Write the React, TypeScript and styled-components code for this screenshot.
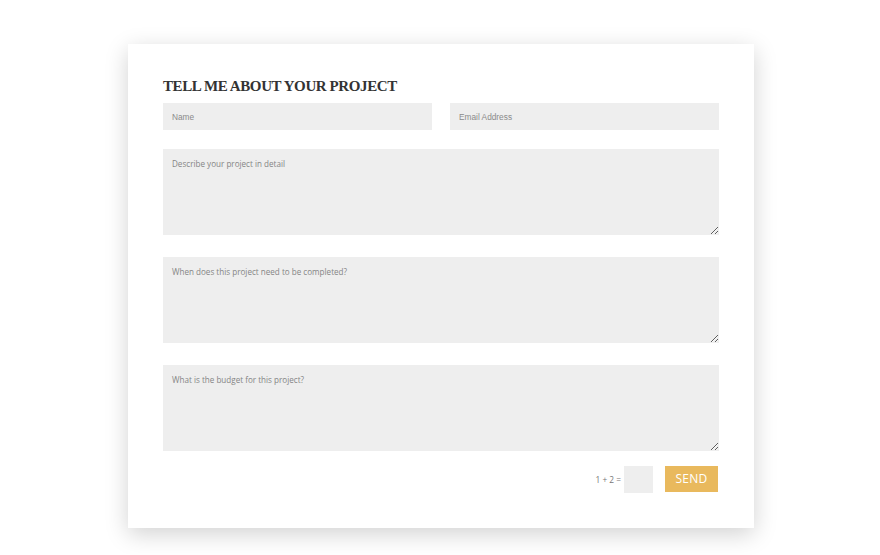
import React from 'react';
import styled, { createGlobalStyle } from 'styled-components';

const GlobalStyle = createGlobalStyle`
  html, body {
    margin: 0;
    padding: 0;
    background: #ffffff;
  }
  body {
    font-family: 'Open Sans', 'Liberation Sans', sans-serif;
  }
`;

const Page = styled.div`
  width: 880px;
  height: 555px;
  padding-top: 44px;
  box-sizing: border-box;
  display: flex;
  justify-content: center;
`;

const Card = styled.form`
  width: 626px;
  height: 484px;
  box-sizing: border-box;
  margin-left: 2px;
  padding: 34px 35px 0 35px;
  background: #ffffff;
  box-shadow: 0 6px 22px rgba(0, 0, 0, 0.18);
  display: flex;
  flex-direction: column;
`;

const Title = styled.h2`
  margin: 0 0 8px 0;
  font-family: 'Liberation Serif', 'DejaVu Serif', serif;
  font-weight: 700;
  font-size: 15px;
  line-height: 17px;
  color: #333333;
  letter-spacing: -0.4px;
`;

const Row = styled.div`
  display: flex;
  gap: 18px;
  margin-bottom: 19px;
`;

const Field = styled.input`
  flex: 1;
  height: 27px;
  border: none;
  outline: none;
  background: #eeeeee;
  padding: 0 9px;
  box-sizing: border-box;
  font-family: 'Liberation Sans', Arial, sans-serif;
  font-size: 8.3px;
  color: #666666;

  &::placeholder {
    color: #8a8a8a;
  }
`;

const Area = styled.textarea`
  display: block;
  width: 100%;
  height: 86px;
  margin: 0 0 22px 0;
  border: none;
  outline: none;
  background: #eeeeee;
  padding: 9px 9px;
  box-sizing: border-box;
  font-family: 'Open Sans', 'Liberation Sans', sans-serif;
  font-size: 8.1px;
  color: #666666;
  resize: vertical;

  &::placeholder {
    color: #858585;
  }
`;

const Footer = styled.div`
  display: flex;
  align-items: center;
  justify-content: flex-end;
  margin-top: -8px;
  padding-right: 1px;
`;

const Captcha = styled.span`
  font-family: 'Open Sans', 'Liberation Sans', sans-serif;
  font-size: 8.3px;
  color: #777777;
  margin-right: 3px;
`;

const CaptchaInput = styled.input`
  width: 29px;
  height: 27px;
  border: none;
  outline: none;
  background: #eeeeee;
  box-sizing: border-box;
  margin-right: 12px;
  margin-top: 1px;
`;

const SendButton = styled.button`
  width: 53px;
  height: 26px;
  margin-top: -1px;
  border: none;
  background: #e9b95d;
  color: #ffffff;
  font-family: 'Open Sans', 'Liberation Sans', sans-serif;
  font-size: 12px;
  letter-spacing: 0.3px;
  padding: 0;
  cursor: pointer;
`;

const App: React.FC = () => {
  return (
    <>
      <GlobalStyle />
      <Page>
        <Card onSubmit={e => e.preventDefault()}>
          <Title>TELL ME ABOUT YOUR PROJECT</Title>
          <Row>
            <Field placeholder="Name" />
            <Field placeholder="Email Address" />
          </Row>
          <Area placeholder="Describe your project in detail" />
          <Area placeholder="When does this project need to be completed?" />
          <Area placeholder="What is the budget for this project?" />
          <Footer>
            <Captcha>1 + 2 =</Captcha>
            <CaptchaInput />
            <SendButton type="submit">SEND</SendButton>
          </Footer>
        </Card>
      </Page>
    </>
  );
};

export default App;
